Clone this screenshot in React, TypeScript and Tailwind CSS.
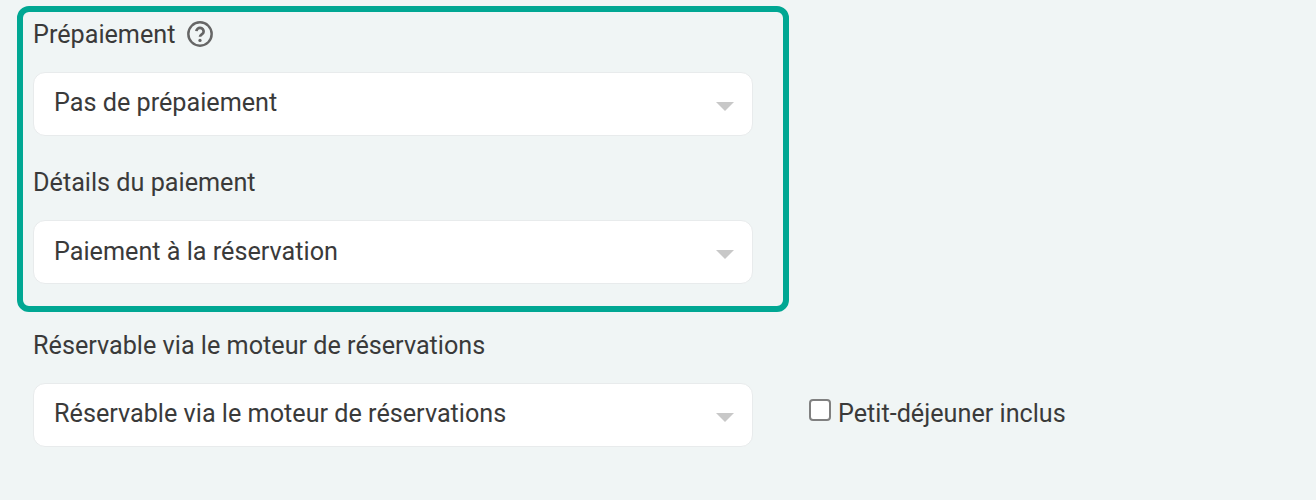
function Select({ text, tall }: { text: string; tall?: boolean }) {
  return (
    <div className={`relative flex h-[64px] w-[720px] items-center rounded-[12px] border border-[#e8ebec] bg-white pl-[20px] text-[25.2px] text-[#3a3a3a] ${tall ? "pb-[1px]" : "pb-[2px]"}`}>
      <span className="leading-[30px]">{text}</span>
      <span className="absolute right-[18px] top-[29px] h-0 w-0 border-x-[9px] border-t-[9px] border-x-transparent border-t-[#c8c8c8]" />
    </div>
  );
}

function Help() {
  return (
    <svg width="28" height="28" viewBox="0 0 24 24" fill="none" className="-mt-[2px] text-[#666666]">
      <circle cx="12" cy="12" r="10" stroke="currentColor" strokeWidth="2.1" />
      <path d="M8.9 9.6a3.1 3.1 0 0 1 6.2.5c0 2.2-3.1 2.3-3.1 4.3" stroke="currentColor" strokeWidth="2.3" fill="none" />
      <circle cx="12" cy="17.5" r="1.4" fill="currentColor" />
    </svg>
  );
}

export default function App() {
  return (
    <div className="h-[500px] w-[1316px] overflow-hidden bg-[#f0f5f5] pl-[17px] pt-[6px] font-['Roboto',sans-serif] text-[25.2px] text-[#3a3a3a]">
      <div className="h-[306px] w-[772px] rounded-[12px] border-[6px] border-[#00a793] pl-[10px] pt-[5px]">
        <div className="flex h-[36px] items-center gap-[11px] leading-[36px]">
          <span>Prépaiement</span>
          <Help />
        </div>
        <div className="mt-[19px]">
          <Select text="Pas de prépaiement" />
        </div>
        <div className="mt-[29px] h-[36px] leading-[36px]">Détails du paiement</div>
        <div className="mt-[19px]">
          <Select text="Paiement à la réservation" tall />
        </div>
      </div>
      <div className="mt-[16px] pl-[16px]">
        <div className="h-[36px] leading-[36px]">Réservable via le moteur de réservations</div>
        <div className="mt-[19px] flex items-center">
          <Select text="Réservable via le moteur de réservations" />
          <label className="ml-[56px] flex items-center">
            <span className="mb-[10px] h-[22px] w-[22px] rounded-[4px] border-2 border-[#808080] bg-white" />
            <span className="mb-[2px] ml-[7px] leading-[36px]">Petit-déjeuner inclus</span>
          </label>
        </div>
      </div>
    </div>
  );
}
